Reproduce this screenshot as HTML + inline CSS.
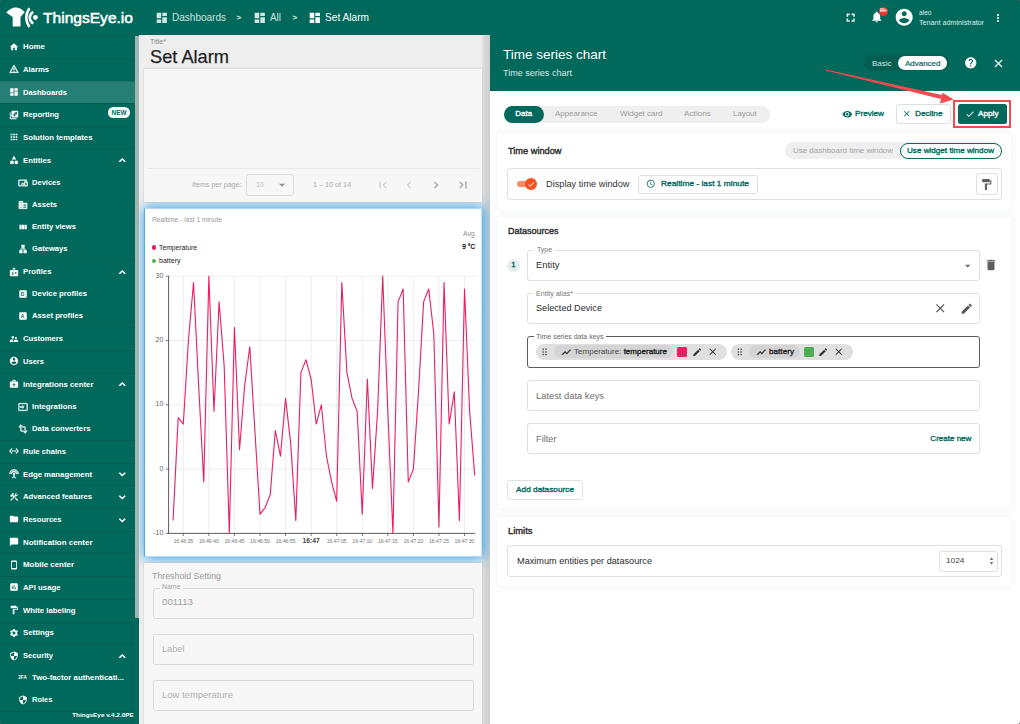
<!DOCTYPE html>
<html><head><meta charset="utf-8"><title>ThingsEye - Set Alarm</title>
<style>
html,body{margin:0;padding:0;}
body{width:1020px;height:724px;overflow:hidden;position:relative;background:#fff;font-family:"Liberation Sans",sans-serif;}
#r{position:absolute;left:0;top:0;width:1020px;height:724px;overflow:hidden;}
#r div,#r svg,#r span{position:absolute;box-sizing:border-box;}
.t{white-space:nowrap;}
</style></head><body><div id="r">
<div style="left:0px;top:0px;width:1020px;height:91px;background:#00695c;"></div>
<div style="left:0px;top:35px;width:139px;height:689px;background:#00695c;"></div>
<svg style="left:0px;top:0px;" width="60" height="36" viewBox="0 0 60 36"><path fill="#fff" d="M6.200 12.600 Q15.400 3 24.700 11.900 L20.500 17 V26.500 H12.700 V17 Z"/><path fill="none" stroke="#fff" stroke-width="2.600" d="M29.400 8.300 Q23.200 17.600 29.400 27"/><path fill="none" stroke="#fff" stroke-width="2.500" d="M33.100 11.800 Q26.300 17.600 33.100 23.600"/><circle fill="#fff" cx="35.400" cy="17.500" r="2.400"/></svg>
<span id="t1" class="t" style="top:9.27px;font-size:14.6px;line-height:18.25px;font-weight:400;color:#fff;left:42.9px;transform-origin:0 50%;transform:scaleX(1.0667);-webkit-text-stroke:0.5px #fff;">ThingsEye.io</span>
<svg style="left:155.4px;top:11.2px;" width="13.6" height="13.6" viewBox="0 0 24 24"><path fill="#d5e5e2" d="M3 13h8V3H3v10zm0 8h8v-6H3v6zm10 0h8V11h-8v10zm0-18v6h8V3h-8z"/></svg>
<span id="t2" class="t" style="top:11.62px;font-size:10.2px;line-height:12.75px;font-weight:400;color:#cfe2df;left:172px;transform-origin:0 50%;transform:scaleX(0.9829);">Dashboards</span>
<span id="t3" class="t" style="top:12.6px;font-size:8px;line-height:10.0px;font-weight:700;color:#e0ecea;left:236.5px;">&gt;</span>
<svg style="left:253.4px;top:11.2px;" width="13.6" height="13.6" viewBox="0 0 24 24"><path fill="#d5e5e2" d="M3 13h8V3H3v10zm0 8h8v-6H3v6zm10 0h8V11h-8v10zm0-18v6h8V3h-8z"/></svg>
<span id="t4" class="t" style="top:11.62px;font-size:10.2px;line-height:12.75px;font-weight:400;color:#cfe2df;left:270px;transform-origin:0 50%;transform:scaleX(0.971);">All</span>
<span id="t5" class="t" style="top:12.6px;font-size:8px;line-height:10.0px;font-weight:700;color:#e0ecea;left:292.5px;">&gt;</span>
<svg style="left:308.4px;top:11.2px;" width="13.6" height="13.6" viewBox="0 0 24 24"><path fill="#fff" d="M3 13h8V3H3v10zm0 8h8v-6H3v6zm10 0h8V11h-8v10zm0-18v6h8V3h-8z"/></svg>
<span id="t6" class="t" style="top:11.62px;font-size:10.2px;line-height:12.75px;font-weight:400;color:#fff;left:324.5px;transform-origin:0 50%;transform:scaleX(0.9961);">Set Alarm</span>
<svg style="left:843.85px;top:11.35px;stroke:#fff;stroke-width:0.6px;" width="13.3" height="13.3" viewBox="0 0 24 24"><path fill="#fff" d="M7 14H5v5h5v-2H7v-3zm-2-4h2V7h3V5H5v5zm12 7h-3v2h5v-5h-2v3zM14 5v2h3v3h2V5h-5z"/></svg>
<svg style="left:869.85px;top:10.35px;" width="13.5" height="13.5" viewBox="0 0 24 24"><path fill="#fff" d="M12 22c1.1 0 2-.9 2-2h-4c0 1.1.89 2 2 2zm6-6v-5c0-3.07-1.64-5.64-4.5-6.32V4c0-.83-.67-1.5-1.5-1.5s-1.500.67-1.500 1.500v.68C7.630 5.360 6 7.920 6 11v5l-2 2v1h16v-1l-2-2z"/></svg>
<div style="left:878.9px;top:6.5px;width:9px;height:9px;background:#e8352f;border-radius:50%;"></div>
<span id="t7" class="t" style="top:8.22px;font-size:4.6px;line-height:5.75px;font-weight:700;color:#fff;left:883.4px;transform:translateX(-50%);letter-spacing:-0.2px;">99+</span>
<svg style="left:894.2px;top:7.2px;" width="20.4" height="20.4" viewBox="0 0 24 24"><path fill="#fff" d="M12 2C6.48 2 2 6.48 2 12s4.48 10 10 10 10-4.48 10-10S17.52 2 12 2zm0 3c1.66 0 3 1.34 3 3s-1.34 3-3 3-3-1.34-3-3 1.34-3 3-3zm0 14.2c-2.500 0-4.710-1.280-6-3.220.030-1.990 4-3.080 6-3.080 1.990 0 5.970 1.090 6 3.080-1.290 1.940-3.500 3.220-6 3.220z"/></svg>
<span id="t8" class="t" style="top:8.82px;font-size:7px;line-height:8.75px;font-weight:400;color:#dfeeeb;left:919px;transform-origin:0 50%;transform:scaleX(0.9445);">aleo</span>
<span id="t9" class="t" style="top:19.23px;font-size:7px;line-height:8.75px;font-weight:400;color:#dfeeeb;left:919px;transform-origin:0 50%;transform:scaleX(1.0249);">Tenant administrator</span>
<svg style="left:992.0px;top:11.8px;" width="12" height="12" viewBox="0 0 24 24"><path fill="#fff" d="M12 8c1.1 0 2-.9 2-2s-.9-2-2-2-2 .9-2 2 .9 2 2 2zm0 2c-1.1 0-2 .9-2 2s.9 2 2 2 2-.9 2-2-.9-2-2-2zm0 6c-1.1 0-2 .9-2 2s.9 2 2 2 2-.9 2-2-.9-2-2-2z"/></svg>
<div style="left:0px;top:35.3px;width:135px;height:1px;background:rgba(0,0,0,0.105);"></div>
<svg style="left:8.5px;top:41.65px;" width="10" height="10" viewBox="0 0 24 24"><path fill="#fff" d="M10 20v-6h4v6h5v-8h3L12 3 2 12h3v8z"/></svg>
<span id="t10" class="t" style="top:42.21px;font-size:7.9px;line-height:9.88px;font-weight:700;color:#fff;left:23.3px;transform-origin:0 50%;transform:scaleX(1.0028);">Home</span>
<div style="left:0px;top:58.0px;width:135px;height:1px;background:rgba(0,0,0,0.105);"></div>
<svg style="left:8.5px;top:64.35px;stroke:#fff;stroke-width:0.9px;" width="10" height="10" viewBox="0 0 24 24"><path fill="#fff" d="M12 5.99L19.53 19H4.47L12 5.99M12 2L1 21h22L12 2zm1 14h-2v2h2v-2zm0-6h-2v4h2v-4z"/></svg>
<span id="t11" class="t" style="top:64.91px;font-size:7.9px;line-height:9.88px;font-weight:700;color:#fff;left:23.3px;transform-origin:0 50%;transform:scaleX(0.9714);">Alarms</span>
<div style="left:0px;top:80.7px;width:135px;height:22.7px;background:rgba(255,255,255,0.15);"></div>
<div style="left:0px;top:80.7px;width:135px;height:1px;background:rgba(0,0,0,0.105);"></div>
<svg style="left:8.5px;top:87.05px;" width="10" height="10" viewBox="0 0 24 24"><path fill="#fff" d="M3 13h8V3H3v10zm0 8h8v-6H3v6zm10 0h8V11h-8v10zm0-18v6h8V3h-8z"/></svg>
<span id="t12" class="t" style="top:87.61px;font-size:7.9px;line-height:9.88px;font-weight:700;color:#fff;left:23.3px;transform-origin:0 50%;transform:scaleX(0.9647);">Dashboards</span>
<div style="left:0px;top:103.4px;width:135px;height:1px;background:rgba(0,0,0,0.105);"></div>
<svg style="left:8.5px;top:109.75px;" width="10" height="10" viewBox="0 0 24 24"><path fill="#fff" d="M4 6H2v14c0 1.100.900 2 2 2h14v-2H4V6zm16-4H8c-1.100 0-2 .900-2 2v12c0 1.100.900 2 2 2h12c1.100 0 2-.900 2-2V4c0-1.100-.900-2-2-2zm-1 9h-4v4h-4V7h2v2h2V5h4v6z"/></svg>
<span id="t13" class="t" style="top:110.31px;font-size:7.9px;line-height:9.88px;font-weight:700;color:#fff;left:23.3px;transform-origin:0 50%;transform:scaleX(0.966);">Reporting</span>
<div style="left:0px;top:126.1px;width:135px;height:1px;background:rgba(0,0,0,0.105);"></div>
<svg style="left:8.5px;top:132.45px;" width="10" height="10" viewBox="0 0 24 24"><path fill="#fff" d="M4 8h4V4H4v4zm6 12h4v-4h-4v4zm-6 0h4v-4H4v4zm0-6h4v-4H4v4zm6 0h4v-4h-4v4zm6-10v4h4V4h-4zm-6 4h4V4h-4v4zm6 6h4v-4h-4v4zm0 6h4v-4h-4v4z"/></svg>
<span id="t14" class="t" style="top:133.01px;font-size:7.9px;line-height:9.88px;font-weight:700;color:#fff;left:23.3px;transform-origin:0 50%;transform:scaleX(0.9845);">Solution templates</span>
<div style="left:0px;top:148.8px;width:135px;height:1px;background:rgba(0,0,0,0.105);"></div>
<svg style="left:8.5px;top:155.15px;" width="10" height="10" viewBox="0 0 24 24"><path fill="#fff" d="M12 2l-5.500 9h11L12 2zm5.500 11a4.500 4.500 0 1 0 0 9 4.500 4.500 0 0 0 0-9zM3 21.500h8v-8H3v8z"/></svg>
<span id="t15" class="t" style="top:155.71px;font-size:7.9px;line-height:9.88px;font-weight:700;color:#fff;left:23.3px;transform-origin:0 50%;transform:scaleX(0.9825);">Entities</span>
<svg style="left:116.05px;top:154.3px;stroke:#fff;stroke-width:1.1px;" width="12.5" height="12.5" viewBox="0 0 24 24"><path fill="#fff" d="M7.41 15.41L12 10.83l4.59 4.58L18 14l-6-6-6 6z"/></svg>
<svg style="left:17.5px;top:177.8px;stroke:#fff;stroke-width:0.9px;" width="10" height="10" viewBox="0 0 24 24"><path fill="#fff" d="M3 6h18V4H3c-1.100 0-2 .900-2 2v12c0 1.100.900 2 2 2h4v-2H3V6zm10 6H9v1.780c-.610.550-1 1.330-1 2.220s.390 1.670 1 2.220V20h4v-1.780c.610-.550 1-1.340 1-2.220s-.390-1.670-1-2.220V12zm-2 5.500c-.830 0-1.500-.670-1.500-1.500s.670-1.500 1.500-1.500 1.500.670 1.500 1.500-.670 1.500-1.500 1.500zM22 8h-6c-.500 0-1 .500-1 1v10c0 .500.500 1 1 1h6c.500 0 1-.500 1-1V9c0-.500-.500-1-1-1zm-1 10h-4v-8h4v8z"/></svg>
<span id="t16" class="t" style="top:177.76px;font-size:7.9px;line-height:9.88px;font-weight:700;color:#fff;left:32.3px;transform-origin:0 50%;transform:scaleX(0.955);">Devices</span>
<svg style="left:17.5px;top:200.0px;stroke:#fff;stroke-width:0.9px;" width="10" height="10" viewBox="0 0 24 24"><path fill="#fff" d="M12 7V3H2v18h20V7H12zM6 19H4v-2h2v2zm0-4H4v-2h2v2zm0-4H4V9h2v2zm0-4H4V5h2v2zm4 12H8v-2h2v2zm0-4H8v-2h2v2zm0-4H8V9h2v2zm0-4H8V5h2v2zm10 12h-8v-2h2v-2h-2v-2h2v-2h-2V9h8v10zm-2-8h-2v2h2v-2zm0 4h-2v2h2v-2z"/></svg>
<span id="t17" class="t" style="top:199.96px;font-size:7.9px;line-height:9.88px;font-weight:700;color:#fff;left:32.3px;transform-origin:0 50%;transform:scaleX(0.9656);">Assets</span>
<svg style="left:17.5px;top:222.2px;" width="10" height="10" viewBox="0 0 24 24"><path fill="#fff" d="M3.500 6.500h5.300v11H3.500zM9.700 6.500h5.100v11H9.700zM15.700 6.500h5.300v11h-5.300z"/></svg>
<span id="t18" class="t" style="top:222.16px;font-size:7.9px;line-height:9.88px;font-weight:700;color:#fff;left:32.3px;transform-origin:0 50%;transform:scaleX(0.9647);">Entity views</span>
<svg style="left:17.5px;top:244.4px;" width="10" height="10" viewBox="0 0 24 24"><path fill="#fff" d="M13 22h8v-7h-3v-4h-5V9h3V2H8v7h3v2H6v4H3v7h8v-7H8v-2h8v2h-3v7z"/></svg>
<span id="t19" class="t" style="top:244.36px;font-size:7.9px;line-height:9.88px;font-weight:700;color:#fff;left:32.3px;transform-origin:0 50%;transform:scaleX(0.9631);">Gateways</span>
<div style="left:0px;top:260.3px;width:135px;height:1px;background:rgba(0,0,0,0.05);"></div>
<svg style="left:8.5px;top:266.65px;" width="10" height="10" viewBox="0 0 24 24"><path fill="#fff" d="M20 7h-5V4c0-1.100-.900-2-2-2h-2c-1.100 0-2 .900-2 2v3H4c-1.100 0-2 .900-2 2v11c0 1.100.900 2 2 2h16c1.100 0 2-.900 2-2V9c0-1.100-.900-2-2-2zM9 12c.830 0 1.500.670 1.500 1.500S9.830 15 9 15s-1.500-.670-1.500-1.500S8.170 12 9 12zm3 6H6v-.750c0-1 2-1.500 3-1.500s3 .500 3 1.500V18zm1-9h-2V4h2v5zm5 7.500h-4V15h4v1.500zm0-3h-4V12h4v1.500z"/></svg>
<span id="t20" class="t" style="top:267.21px;font-size:7.9px;line-height:9.88px;font-weight:700;color:#fff;left:23.3px;transform-origin:0 50%;transform:scaleX(0.9843);">Profiles</span>
<svg style="left:116.05px;top:265.8px;stroke:#fff;stroke-width:1.1px;" width="12.5" height="12.5" viewBox="0 0 24 24"><path fill="#fff" d="M7.41 15.41L12 10.83l4.59 4.58L18 14l-6-6-6 6z"/></svg>
<svg style="left:17.5px;top:289.2px;" width="10" height="10" viewBox="0 0 24 24"><path fill="#fff" d="M19 3H5c-1.100 0-2 .900-2 2v14c0 1.100.900 2 2 2h14c1.100 0 2-.900 2-2V5c0-1.100-.900-2-2-2z"/></svg>
<span id="t21" class="t" style="top:291.18px;font-size:5px;line-height:6.25px;font-weight:700;color:#00695c;left:22.5px;transform:translateX(-50%);">D</span>
<span id="t22" class="t" style="top:289.26px;font-size:7.9px;line-height:9.88px;font-weight:700;color:#fff;left:32.3px;transform-origin:0 50%;transform:scaleX(0.9797);">Device profiles</span>
<svg style="left:17.5px;top:311.4px;" width="10" height="10" viewBox="0 0 24 24"><path fill="#fff" d="M19 3H5c-1.100 0-2 .900-2 2v14c0 1.100.900 2 2 2h14c1.100 0 2-.900 2-2V5c0-1.100-.900-2-2-2z"/></svg>
<span id="t23" class="t" style="top:313.38px;font-size:5px;line-height:6.25px;font-weight:700;color:#00695c;left:22.5px;transform:translateX(-50%);">A</span>
<span id="t24" class="t" style="top:311.46px;font-size:7.9px;line-height:9.88px;font-weight:700;color:#fff;left:32.3px;transform-origin:0 50%;transform:scaleX(0.9772);">Asset profiles</span>
<div style="left:0px;top:327.4px;width:135px;height:1px;background:rgba(0,0,0,0.05);"></div>
<svg style="left:8.5px;top:333.75px;" width="10" height="10" viewBox="0 0 24 24"><path fill="#fff" d="M16.500 12c1.380 0 2.490-1.120 2.490-2.500S17.880 7 16.500 7C15.120 7 14 8.120 14 9.500s1.120 2.500 2.500 2.500zM9 11c1.660 0 2.990-1.340 2.990-3S10.660 5 9 5C7.340 5 6 6.340 6 8s1.340 3 3 3zm7.500 3c-1.830 0-5.500.920-5.500 2.750V19h11v-2.250c0-1.830-3.670-2.750-5.500-2.750zM9 13c-2.330 0-7 1.170-7 3.500V19h7v-2.250c0-.850.330-2.340 2.370-3.470C10.500 13.100 9.660 13 9 13z"/></svg>
<span id="t25" class="t" style="top:334.31px;font-size:7.9px;line-height:9.88px;font-weight:700;color:#fff;left:23.3px;transform-origin:0 50%;transform:scaleX(0.9704);">Customers</span>
<div style="left:0px;top:350.1px;width:135px;height:1px;background:rgba(0,0,0,0.105);"></div>
<svg style="left:8.5px;top:356.45px;" width="10" height="10" viewBox="0 0 24 24"><path fill="#fff" d="M12 2C6.48 2 2 6.48 2 12s4.48 10 10 10 10-4.48 10-10S17.52 2 12 2zm0 3c1.66 0 3 1.34 3 3s-1.34 3-3 3-3-1.34-3-3 1.34-3 3-3zm0 14.2c-2.500 0-4.710-1.280-6-3.220.030-1.990 4-3.080 6-3.080 1.990 0 5.970 1.090 6 3.080-1.290 1.940-3.500 3.220-6 3.220z"/></svg>
<span id="t26" class="t" style="top:357.01px;font-size:7.9px;line-height:9.88px;font-weight:700;color:#fff;left:23.3px;transform-origin:0 50%;transform:scaleX(0.9573);">Users</span>
<div style="left:0px;top:372.8px;width:135px;height:1px;background:rgba(0,0,0,0.105);"></div>
<svg style="left:8.5px;top:379.15px;" width="10" height="10" viewBox="0 0 24 24"><path fill="#fff" d="M20 6h-4V4c0-1.100-.900-2-2-2h-4c-1.100 0-2 .900-2 2v2H4c-1.100 0-2 .900-2 2v11c0 1.100.900 2 2 2h16c1.100 0 2-.900 2-2V8c0-1.100-.900-2-2-2zM10 4h4v2h-4V4zm6 11h-3v3h-2v-3H8v-2h3v-3h2v3h3v2z"/></svg>
<span id="t27" class="t" style="top:379.71px;font-size:7.9px;line-height:9.88px;font-weight:700;color:#fff;left:23.3px;transform-origin:0 50%;transform:scaleX(0.9925);">Integrations center</span>
<svg style="left:116.05px;top:378.3px;stroke:#fff;stroke-width:1.1px;" width="12.5" height="12.5" viewBox="0 0 24 24"><path fill="#fff" d="M7.41 15.41L12 10.83l4.59 4.58L18 14l-6-6-6 6z"/></svg>
<svg style="left:17.5px;top:401.8px;stroke:#fff;stroke-width:0.9px;" width="10" height="10" viewBox="0 0 24 24"><path fill="#fff" d="M21 3.010H3c-1.100 0-2 .900-2 2V9h2V4.990h18v14.030H3V15H1v4.010c0 1.100.900 1.980 2 1.980h18c1.100 0 2-.880 2-1.980v-14c0-1.110-.900-2-2-2zM11 16l4-4-4-4v3H1v2h10v3z"/></svg>
<span id="t28" class="t" style="top:401.76px;font-size:7.9px;line-height:9.88px;font-weight:700;color:#fff;left:32.3px;transform-origin:0 50%;transform:scaleX(0.9855);">Integrations</span>
<svg style="left:17.5px;top:424.0px;stroke:#fff;stroke-width:0.9px;" width="10" height="10" viewBox="0 0 24 24"><path fill="#fff" d="M22 18v-2H8V4h2L7 1 4 4h2v2H2v2h4v8c0 1.100.900 2 2 2h8v2h-2l3 3 3-3h-2v-2h4zM10 8h6v6h2V8c0-1.100-.900-2-2-2h-6v2z"/></svg>
<span id="t29" class="t" style="top:423.96px;font-size:7.9px;line-height:9.88px;font-weight:700;color:#fff;left:32.3px;transform-origin:0 50%;transform:scaleX(0.9806);">Data converters</span>
<div style="left:0px;top:439.9px;width:135px;height:1px;background:rgba(0,0,0,0.105);"></div>
<svg style="left:8.5px;top:446.25px;stroke:#fff;stroke-width:0.9px;" width="10" height="10" viewBox="0 0 24 24"><path fill="#fff" d="M7.770 6.760L6.230 5.480.820 12l5.410 6.520 1.540-1.280L3.420 12l4.350-5.240zM7 13h2v-2H7v2zm10-2h-2v2h2v-2zm-6 2h2v-2h-2v2zm6.770-7.520l-1.540 1.280L20.580 12l-4.350 5.240 1.540 1.280L23.180 12l-5.410-6.520z"/></svg>
<span id="t30" class="t" style="top:446.81px;font-size:7.9px;line-height:9.88px;font-weight:700;color:#fff;left:23.3px;transform-origin:0 50%;transform:scaleX(0.9707);">Rule chains</span>
<div style="left:0px;top:462.6px;width:135px;height:1px;background:rgba(0,0,0,0.105);"></div>
<svg style="left:8.5px;top:468.95px;stroke:#fff;stroke-width:0.9px;" width="10" height="10" viewBox="0 0 24 24"><path fill="#fff" d="M12 5c-3.870 0-7 3.130-7 7h2c0-2.760 2.240-5 5-5s5 2.240 5 5h2c0-3.870-3.130-7-7-7zm1 9.290c.880-.390 1.500-1.260 1.500-2.290 0-1.380-1.120-2.500-2.500-2.500S9.500 10.620 9.500 12c0 1.020.620 1.900 1.500 2.290v3.300L7.590 21 9 22.410l3-3 3 3L16.410 21 13 17.590v-3.300zM12 1C5.930 1 1 5.930 1 12h2c0-4.970 4.030-9 9-9s9 4.030 9 9h2c0-6.070-4.930-11-11-11z"/></svg>
<span id="t31" class="t" style="top:469.51px;font-size:7.9px;line-height:9.88px;font-weight:700;color:#fff;left:23.3px;transform-origin:0 50%;transform:scaleX(0.9833);">Edge management</span>
<svg style="left:116.05px;top:468.1px;stroke:#fff;stroke-width:1.1px;" width="12.5" height="12.5" viewBox="0 0 24 24"><path fill="#fff" d="M7.41 8.59L12 13.17l4.59-4.58L18 10l-6 6-6-6 1.41-1.41z"/></svg>
<div style="left:0px;top:485.3px;width:135px;height:1px;background:rgba(0,0,0,0.105);"></div>
<svg style="left:8.5px;top:491.65px;" width="10" height="10" viewBox="0 0 24 24"><path fill="#fff" d="M13.780 15.300l6 6 2.110-2.160-6-6-2.110 2.160zm3.720-5.200c-.39 0-.81-.05-1.140-.19L4.970 21.250l-2.110-2.110 7.410-7.400-1.780-1.790-.71.700-1.440-1.400v2.860l-.7.700-3.520-3.560.7-.7h2.810l-1.400-1.410 3.560-3.560a2.976 2.976 0 0 1 4.220 0l-2.110 2.110 1.410 1.410-.71.700 1.790 1.780 1.830-1.830c-.14-.33-.19-.75-.19-1.120 0-1.980 1.560-3.570 3.520-3.570.59 0 1.100.14 1.580.42L16.410 6.200l1.500 1.500 2.720-2.720c.28.470.37.980.37 1.590 0 1.960-1.540 3.530-3.500 3.530z"/></svg>
<span id="t32" class="t" style="top:492.21px;font-size:7.9px;line-height:9.88px;font-weight:700;color:#fff;left:23.3px;transform-origin:0 50%;transform:scaleX(0.9772);">Advanced features</span>
<svg style="left:116.05px;top:490.8px;stroke:#fff;stroke-width:1.1px;" width="12.5" height="12.5" viewBox="0 0 24 24"><path fill="#fff" d="M7.41 8.59L12 13.17l4.59-4.58L18 10l-6 6-6-6 1.41-1.41z"/></svg>
<div style="left:0px;top:508.0px;width:135px;height:1px;background:rgba(0,0,0,0.105);"></div>
<svg style="left:8.5px;top:514.35px;" width="10" height="10" viewBox="0 0 24 24"><path fill="#fff" d="M10 4H4c-1.100 0-1.990.900-1.990 2L2 18c0 1.100.900 2 2 2h16c1.100 0 2-.900 2-2V8c0-1.100-.900-2-2-2h-8l-2-2z"/></svg>
<span id="t33" class="t" style="top:514.91px;font-size:7.9px;line-height:9.88px;font-weight:700;color:#fff;left:23.3px;transform-origin:0 50%;transform:scaleX(0.9539);">Resources</span>
<svg style="left:116.05px;top:513.5px;stroke:#fff;stroke-width:1.1px;" width="12.5" height="12.5" viewBox="0 0 24 24"><path fill="#fff" d="M7.41 8.59L12 13.17l4.59-4.58L18 10l-6 6-6-6 1.41-1.41z"/></svg>
<div style="left:0px;top:530.7px;width:135px;height:1px;background:rgba(0,0,0,0.105);"></div>
<svg style="left:8.5px;top:537.05px;" width="10" height="10" viewBox="0 0 24 24"><path fill="#fff" d="M20 2H4c-1.100 0-2 .900-2 2v18l4-4h14c1.100 0 2-.900 2-2V4c0-1.100-.900-2-2-2z"/></svg>
<span id="t34" class="t" style="top:537.61px;font-size:7.9px;line-height:9.88px;font-weight:700;color:#fff;left:23.3px;transform-origin:0 50%;transform:scaleX(1.0032);">Notification center</span>
<div style="left:0px;top:553.4px;width:135px;height:1px;background:rgba(0,0,0,0.105);"></div>
<svg style="left:8.5px;top:559.75px;" width="10" height="10" viewBox="0 0 24 24"><path fill="#fff" d="M17 1.010L7 1c-1.100 0-2 .900-2 2v18c0 1.100.900 2 2 2h10c1.100 0 2-.900 2-2V3c0-1.100-.900-1.990-2-1.990zM17 19H7V5h10v14z"/></svg>
<span id="t35" class="t" style="top:560.31px;font-size:7.9px;line-height:9.88px;font-weight:700;color:#fff;left:23.3px;transform-origin:0 50%;transform:scaleX(1.0025);">Mobile center</span>
<div style="left:0px;top:576.1px;width:135px;height:1px;background:rgba(0,0,0,0.105);"></div>
<svg style="left:8.5px;top:582.45px;" width="10" height="10" viewBox="0 0 24 24"><path fill="#fff" d="M19 3H5c-1.100 0-2 .900-2 2v14c0 1.100.900 2 2 2h14c1.100 0 2-.900 2-2V5c0-1.100-.900-2-2-2zM9 17H7v-7h2v7zm4 0h-2V7h2v10zm4 0h-2v-4h2v4z"/></svg>
<span id="t36" class="t" style="top:583.01px;font-size:7.9px;line-height:9.88px;font-weight:700;color:#fff;left:23.3px;transform-origin:0 50%;transform:scaleX(0.9828);">API usage</span>
<div style="left:0px;top:598.8px;width:135px;height:1px;background:rgba(0,0,0,0.105);"></div>
<svg style="left:8.5px;top:605.15px;" width="10" height="10" viewBox="0 0 24 24"><path fill="#fff" d="M18 4V3c0-.550-.450-1-1-1H5c-.550 0-1 .450-1 1v4c0 .550.450 1 1 1h12c.550 0 1-.450 1-1V6h1v4H9v11c0 .550.450 1 1 1h2c.550 0 1-.450 1-1v-9h8V4h-3z"/></svg>
<span id="t37" class="t" style="top:605.71px;font-size:7.9px;line-height:9.88px;font-weight:700;color:#fff;left:23.3px;transform-origin:0 50%;transform:scaleX(0.9816);">White labeling</span>
<div style="left:0px;top:621.5px;width:135px;height:1px;background:rgba(0,0,0,0.105);"></div>
<svg style="left:8.5px;top:627.85px;" width="10" height="10" viewBox="0 0 24 24"><path fill="#fff" d="M19.140 12.940c.040-.300.060-.610.060-.940 0-.320-.020-.640-.070-.940l2.030-1.580c.180-.140.230-.410.120-.610l-1.920-3.320c-.120-.220-.370-.290-.590-.220l-2.390.960c-.500-.380-1.030-.700-1.620-.940l-.360-2.540c-.040-.240-.240-.410-.480-.410h-3.840c-.240 0-.430.170-.470.410l-.360 2.540c-.590.240-1.130.570-1.620.940l-2.390-.960c-.220-.080-.470 0-.590.220L2.740 8.870c-.120.210-.080.470.120.610l2.030 1.580c-.050.300-.090.630-.090.940s.020.640.070.940l-2.030 1.580c-.180.140-.230.410-.120.610l1.920 3.320c.120.220.370.290.590.220l2.390-.960c.500.380 1.030.700 1.620.940l.360 2.540c.050.240.240.410.480.410h3.840c.240 0 .440-.170.470-.410l.360-2.540c.590-.240 1.130-.560 1.620-.940l2.390.960c.220.080.470 0 .590-.220l1.920-3.320c.120-.220.070-.470-.120-.610l-2.010-1.580zM12 15.600c-1.980 0-3.600-1.620-3.600-3.600s1.620-3.600 3.600-3.600 3.600 1.620 3.600 3.600-1.620 3.600-3.600 3.600z"/></svg>
<span id="t38" class="t" style="top:628.41px;font-size:7.9px;line-height:9.88px;font-weight:700;color:#fff;left:23.3px;transform-origin:0 50%;transform:scaleX(0.9955);">Settings</span>
<div style="left:0px;top:644.2px;width:135px;height:1px;background:rgba(0,0,0,0.105);"></div>
<svg style="left:8.5px;top:650.55px;" width="10" height="10" viewBox="0 0 24 24"><path fill="#fff" d="M12 1L3 5v6c0 5.550 3.840 10.740 9 12 5.160-1.260 9-6.450 9-12V5l-9-4zm0 10.990h7c-.530 4.120-3.280 7.790-7 8.940V12H5V6.300l7-3.110v8.800z"/></svg>
<span id="t39" class="t" style="top:651.11px;font-size:7.9px;line-height:9.88px;font-weight:700;color:#fff;left:23.3px;transform-origin:0 50%;transform:scaleX(0.9634);">Security</span>
<svg style="left:116.05px;top:649.7px;stroke:#fff;stroke-width:1.1px;" width="12.5" height="12.5" viewBox="0 0 24 24"><path fill="#fff" d="M7.41 15.41L12 10.83l4.59 4.58L18 14l-6-6-6 6z"/></svg>
<span id="t40" class="t" style="top:675.03px;font-size:4.6px;line-height:5.75px;font-weight:700;color:#fff;left:18.3px;">2FA</span>
<span id="t41" class="t" style="top:673.16px;font-size:7.9px;line-height:9.88px;font-weight:700;color:#fff;left:32.3px;transform-origin:0 50%;transform:scaleX(0.9914);">Two-factor authenticati...</span>
<svg style="left:17.5px;top:695.4px;" width="10" height="10" viewBox="0 0 24 24"><path fill="#fff" d="M12 1L3 5v6c0 5.550 3.840 10.740 9 12 5.160-1.260 9-6.450 9-12V5l-9-4zm0 10.990h7c-.530 4.120-3.280 7.790-7 8.940V12H5V6.300l7-3.110v8.800z"/></svg>
<span id="t42" class="t" style="top:695.36px;font-size:7.9px;line-height:9.88px;font-weight:700;color:#fff;left:32.3px;transform-origin:0 50%;transform:scaleX(0.9535);">Roles</span>
<div style="left:0px;top:711.3px;width:135px;height:1px;background:rgba(0,0,0,0.105);"></div>
<div style="left:108px;top:107.3px;width:22px;height:10.6px;background:#fff;border-radius:5.300px;"></div>
<span id="t43" class="t" style="top:108.7px;font-size:6.4px;line-height:8.0px;font-weight:700;color:#00695c;left:119px;transform:translateX(-50%);">NEW</span>
<span id="t44" class="t" style="top:711.12px;font-size:6.2px;line-height:7.75px;font-weight:700;color:#fff;right:886.5px;transform-origin:100% 50%;transform:scaleX(1.0296);">ThingsEye v.4.2.0PE</span>
<div style="left:135px;top:36px;width:4px;height:581.5px;background:#9fb6b1;"></div>
<div style="left:139px;top:35.3px;width:350.5px;height:689px;background:#eeeeee;"></div>
<div style="left:481.5px;top:35.3px;width:8px;height:689px;background:linear-gradient(90deg,#e2e2e2 0%,#d6d6d6 40%,#cdcdcd 100%);"></div>
<div style="left:139px;top:35.300px;width:350.500px;height:689px;overflow:hidden;"><div style="left:5.800px;top:173px;width:337px;height:348px;box-shadow:0 0 12px 1.500px rgb(45,160,236);"></div></div>
<span id="t45" class="t" style="top:38.15px;font-size:6.8px;line-height:8.5px;font-weight:400;color:#8a8a8a;left:150px;transform-origin:0 50%;transform:scaleX(1.0503);">Title*</span>
<span id="t46" class="t" style="top:45.62px;font-size:18.2px;line-height:22.75px;font-weight:400;color:#1f1f1f;left:149.5px;transform-origin:0 50%;transform:scaleX(1.002);-webkit-text-stroke:0.25px #1f1f1f;">Set Alarm</span>
<div style="left:143.5px;top:69px;width:338.5px;height:133px;background:#f7f7f7;box-shadow:0 0 2px rgba(0,0,0,0.16);"></div>
<div style="left:147px;top:168.3px;width:331.5px;height:1px;background:#e9e9e9;"></div>
<span id="t47" class="t" style="top:181.12px;font-size:7px;line-height:8.75px;font-weight:400;color:#ababab;left:192px;transform-origin:0 50%;transform:scaleX(1.0177);">Items per page:</span>
<div style="left:246px;top:173.5px;width:47.5px;height:22px;border:1px solid #dcdcdc;border-radius:2.500px;"></div>
<span id="t48" class="t" style="top:181.12px;font-size:7px;line-height:8.75px;font-weight:400;color:#b9b9b9;left:255.5px;transform-origin:0 50%;transform:scaleX(0.9619);">10</span>
<svg style="left:274.5px;top:178.0px;" width="14" height="14" viewBox="0 0 24 24"><path fill="#8f8f8f" d="M7 10l5 5 5-5z"/></svg>
<span id="t49" class="t" style="top:181.12px;font-size:7px;line-height:8.75px;font-weight:400;color:#ababab;left:313px;transform-origin:0 50%;transform:scaleX(1.0275);">1 – 10 of 14</span>
<svg style="left:375.8px;top:177.8px;" width="14" height="14" viewBox="0 0 24 24"><path fill="#cbcbcb" d="M18.410 16.590L13.820 12l4.590-4.590L17 6l-6 6 6 6zM6 6h2v12H6z"/></svg>
<svg style="left:402.0px;top:177.8px;" width="14" height="14" viewBox="0 0 24 24"><path fill="#cbcbcb" d="M15.410 7.410L14 6l-6 6 6 6 1.410-1.410L10.830 12z"/></svg>
<svg style="left:429.0px;top:177.8px;" width="14" height="14" viewBox="0 0 24 24"><path fill="#999" d="M10 6L8.590 7.410 13.170 12l-4.580 4.590L10 18l6-6z"/></svg>
<svg style="left:455.8px;top:177.8px;" width="14" height="14" viewBox="0 0 24 24"><path fill="#999" d="M5.590 7.410L10.180 12l-4.590 4.590L7 18l6-6-6-6zM16 6h2v12h-2z"/></svg>
<div style="left:144.3px;top:207.8px;width:338px;height:349px;background:#fff;border:1px solid rgba(60,160,240,0.4);border-left-color:rgba(40,150,240,0.8);border-right-color:rgba(60,160,240,0.3);"></div>
<span id="t50" class="t" style="top:216.05px;font-size:6.8px;line-height:8.5px;font-weight:400;color:#9a9a9a;left:151.5px;transform-origin:0 50%;transform:scaleX(0.9803);">Realtime - last 1 minute</span>
<span id="t51" class="t" style="top:229.95px;font-size:6.8px;line-height:8.5px;font-weight:400;color:#8e8e8e;right:545px;transform-origin:100% 50%;transform:scaleX(0.9919);">Avg</span>
<div style="left:151.7px;top:244.9px;width:4.8px;height:4.8px;background:#e91e63;border-radius:50%;"></div>
<span id="t52" class="t" style="top:243.59px;font-size:6.9px;line-height:8.62px;font-weight:400;color:#222;left:158.5px;transform-origin:0 50%;transform:scaleX(0.9822);">Temperature</span>
<span id="t53" class="t" style="top:243.35px;font-size:6.8px;line-height:8.5px;font-weight:400;color:#222;-webkit-text-stroke:0.29px #222;right:545px;transform-origin:100% 50%;transform:scaleX(0.9777);">9 °C</span>
<div style="left:151.7px;top:258.6px;width:4.8px;height:4.8px;background:#4caf50;border-radius:50%;"></div>
<span id="t54" class="t" style="top:257.19px;font-size:6.9px;line-height:8.62px;font-weight:400;color:#222;left:158.5px;transform-origin:0 50%;transform:scaleX(1.02);">battery</span>
<svg style="left:0px;top:0px;" width="1020" height="724" viewBox="0 0 1020 724"><line x1="168.6" x2="475.2" y1="276.15" y2="276.15" stroke="#e6e6e6" stroke-width="0.700"/><line x1="168.6" x2="475.2" y1="340.46" y2="340.46" stroke="#e6e6e6" stroke-width="0.700"/><line x1="168.6" x2="475.2" y1="404.77" y2="404.77" stroke="#e6e6e6" stroke-width="0.700"/><line x1="168.6" x2="475.2" y1="469.08" y2="469.08" stroke="#e6e6e6" stroke-width="0.700"/><line x1="183.3" x2="183.3" y1="276.15" y2="533.39" stroke="#e6e6e6" stroke-width="0.700"/><line x1="183.3" x2="183.3" y1="533.39" y2="535.99" stroke="#555" stroke-width="0.800"/><line x1="208.87" x2="208.87" y1="276.15" y2="533.39" stroke="#e6e6e6" stroke-width="0.700"/><line x1="208.87" x2="208.87" y1="533.39" y2="535.99" stroke="#555" stroke-width="0.800"/><line x1="234.43" x2="234.43" y1="276.15" y2="533.39" stroke="#e6e6e6" stroke-width="0.700"/><line x1="234.43" x2="234.43" y1="533.39" y2="535.99" stroke="#555" stroke-width="0.800"/><line x1="260.0" x2="260.0" y1="276.15" y2="533.39" stroke="#e6e6e6" stroke-width="0.700"/><line x1="260.0" x2="260.0" y1="533.39" y2="535.99" stroke="#555" stroke-width="0.800"/><line x1="285.56" x2="285.56" y1="276.15" y2="533.39" stroke="#e6e6e6" stroke-width="0.700"/><line x1="285.56" x2="285.56" y1="533.39" y2="535.99" stroke="#555" stroke-width="0.800"/><line x1="311.12" x2="311.12" y1="276.15" y2="533.39" stroke="#e6e6e6" stroke-width="0.700"/><line x1="311.12" x2="311.12" y1="533.39" y2="535.99" stroke="#555" stroke-width="0.800"/><line x1="336.69" x2="336.69" y1="276.15" y2="533.39" stroke="#e6e6e6" stroke-width="0.700"/><line x1="336.69" x2="336.69" y1="533.39" y2="535.99" stroke="#555" stroke-width="0.800"/><line x1="362.25" x2="362.25" y1="276.15" y2="533.39" stroke="#e6e6e6" stroke-width="0.700"/><line x1="362.25" x2="362.25" y1="533.39" y2="535.99" stroke="#555" stroke-width="0.800"/><line x1="387.82" x2="387.82" y1="276.15" y2="533.39" stroke="#e6e6e6" stroke-width="0.700"/><line x1="387.82" x2="387.82" y1="533.39" y2="535.99" stroke="#555" stroke-width="0.800"/><line x1="413.38" x2="413.38" y1="276.15" y2="533.39" stroke="#e6e6e6" stroke-width="0.700"/><line x1="413.38" x2="413.38" y1="533.39" y2="535.99" stroke="#555" stroke-width="0.800"/><line x1="438.95" x2="438.95" y1="276.15" y2="533.39" stroke="#e6e6e6" stroke-width="0.700"/><line x1="438.95" x2="438.95" y1="533.39" y2="535.99" stroke="#555" stroke-width="0.800"/><line x1="464.52" x2="464.52" y1="276.15" y2="533.39" stroke="#e6e6e6" stroke-width="0.700"/><line x1="464.52" x2="464.52" y1="533.39" y2="535.99" stroke="#555" stroke-width="0.800"/><line x1="166.0" x2="168.6" y1="276.15" y2="276.15" stroke="#555" stroke-width="0.800"/><line x1="166.0" x2="168.6" y1="340.46" y2="340.46" stroke="#555" stroke-width="0.800"/><line x1="166.0" x2="168.6" y1="404.77" y2="404.77" stroke="#555" stroke-width="0.800"/><line x1="166.0" x2="168.6" y1="469.08" y2="469.08" stroke="#555" stroke-width="0.800"/><line x1="166.0" x2="168.6" y1="533.39" y2="533.39" stroke="#555" stroke-width="0.800"/><line x1="168.6" x2="168.6" y1="275.75" y2="533.79" stroke="#4a4a4a" stroke-width="0.900"/><line x1="168.6" x2="475.2" y1="533.39" y2="533.39" stroke="#4a4a4a" stroke-width="0.900"/><polyline fill="none" stroke="#e91e63" stroke-width="1.100" stroke-linejoin="round" points="173.07,520.53 178.19,417.63 183.3,424.06 188.41,340.46 193.53,282.58 198.64,385.48 203.75,481.94 208.87,276.15 213.98,411.2 219.09,301.87 224.2,366.18 229.32,533.39 234.43,327.6 239.54,449.79 244.66,385.48 249.77,346.89 254.88,430.49 260.0,514.1 265.11,507.67 270.22,494.8 275.33,430.49 280.45,456.22 285.56,398.34 290.67,443.36 295.79,520.53 300.9,372.62 306.01,359.75 311.12,379.05 316.24,424.06 321.35,404.77 326.46,456.22 331.58,481.94 336.69,501.24 341.8,282.58 346.92,372.62 352.03,398.34 357.14,411.2 362.25,514.1 367.37,379.05 372.48,488.37 377.59,411.2 382.71,276.15 387.82,411.2 392.93,533.39 398.05,301.87 403.16,289.01 408.27,481.94 413.38,469.08 418.5,391.91 423.61,301.87 428.72,289.01 433.84,334.03 438.95,526.96 444.06,282.58 449.18,424.06 454.29,391.91 459.4,520.53 464.52,289.01 469.63,411.2 474.74,475.51"/></svg>
<span id="t55" class="t" style="top:271.67px;font-size:7px;line-height:8.75px;font-weight:400;color:#666;right:856.6px;">30</span>
<span id="t56" class="t" style="top:335.98px;font-size:7px;line-height:8.75px;font-weight:400;color:#666;right:856.6px;">20</span>
<span id="t57" class="t" style="top:400.29px;font-size:7px;line-height:8.75px;font-weight:400;color:#666;right:856.6px;">10</span>
<span id="t58" class="t" style="top:464.6px;font-size:7px;line-height:8.75px;font-weight:400;color:#666;right:856.6px;">0</span>
<span id="t59" class="t" style="top:528.91px;font-size:7px;line-height:8.75px;font-weight:400;color:#666;right:856.6px;">-10</span>
<span id="t60" class="t" style="top:537.99px;font-size:5.3px;line-height:6.62px;font-weight:400;color:#777;left:183.3px;transform:translateX(-50%);letter-spacing:-0.1px;">16:46:35</span>
<span id="t61" class="t" style="top:537.99px;font-size:5.3px;line-height:6.62px;font-weight:400;color:#777;left:208.87px;transform:translateX(-50%);letter-spacing:-0.1px;">16:46:40</span>
<span id="t62" class="t" style="top:537.99px;font-size:5.3px;line-height:6.62px;font-weight:400;color:#777;left:234.43px;transform:translateX(-50%);letter-spacing:-0.1px;">16:46:45</span>
<span id="t63" class="t" style="top:537.99px;font-size:5.3px;line-height:6.62px;font-weight:400;color:#777;left:260.0px;transform:translateX(-50%);letter-spacing:-0.1px;">16:46:50</span>
<span id="t64" class="t" style="top:537.99px;font-size:5.3px;line-height:6.62px;font-weight:400;color:#777;left:285.56px;transform:translateX(-50%);letter-spacing:-0.1px;">16:46:55</span>
<span id="t65" class="t" style="top:537.35px;font-size:6.8px;line-height:8.5px;font-weight:700;color:#444;left:311.12px;transform:translateX(-50%);">16:47</span>
<span id="t66" class="t" style="top:537.99px;font-size:5.3px;line-height:6.62px;font-weight:400;color:#777;left:336.69px;transform:translateX(-50%);letter-spacing:-0.1px;">16:47:05</span>
<span id="t67" class="t" style="top:537.99px;font-size:5.3px;line-height:6.62px;font-weight:400;color:#777;left:362.25px;transform:translateX(-50%);letter-spacing:-0.1px;">16:47:10</span>
<span id="t68" class="t" style="top:537.99px;font-size:5.3px;line-height:6.62px;font-weight:400;color:#777;left:387.82px;transform:translateX(-50%);letter-spacing:-0.1px;">16:47:15</span>
<span id="t69" class="t" style="top:537.99px;font-size:5.3px;line-height:6.62px;font-weight:400;color:#777;left:413.38px;transform:translateX(-50%);letter-spacing:-0.1px;">16:47:20</span>
<span id="t70" class="t" style="top:537.99px;font-size:5.3px;line-height:6.62px;font-weight:400;color:#777;left:438.95px;transform:translateX(-50%);letter-spacing:-0.1px;">16:47:25</span>
<span id="t71" class="t" style="top:537.99px;font-size:5.3px;line-height:6.62px;font-weight:400;color:#777;left:464.52px;transform:translateX(-50%);letter-spacing:-0.1px;">16:47:30</span>
<div style="left:143.5px;top:563px;width:338.5px;height:170px;background:#f7f7f7;box-shadow:0 0 2px rgba(0,0,0,0.16);"></div>
<span id="t72" class="t" style="top:571.17px;font-size:9px;line-height:11.25px;font-weight:400;color:#9a9a9a;left:152px;transform-origin:0 50%;transform:scaleX(0.9781);">Threshold Setting</span>
<div style="left:153px;top:587.5px;width:321px;height:31px;border:1px solid #dadada;border-radius:2.500px;"></div>
<div style="left:160px;top:586.5px;width:23px;height:3px;background:#f7f7f7;"></div>
<span id="t73" class="t" style="top:583.45px;font-size:6.8px;line-height:8.5px;font-weight:400;color:#a3a3a3;left:162px;transform-origin:0 50%;transform:scaleX(1.0198);">Name</span>
<span id="t74" class="t" style="top:597.49px;font-size:9.3px;line-height:11.62px;font-weight:400;color:#a0a0a0;left:162px;transform-origin:0 50%;transform:scaleX(1.0453);">001113</span>
<div style="left:153px;top:633.5px;width:321px;height:31px;border:1px solid #dadada;border-radius:2.500px;"></div>
<span id="t75" class="t" style="top:644.29px;font-size:9.3px;line-height:11.62px;font-weight:400;color:#b0b0b0;left:162px;transform-origin:0 50%;transform:scaleX(0.989);">Label</span>
<div style="left:153px;top:679.5px;width:321px;height:31px;border:1px solid #dadada;border-radius:2.500px;"></div>
<span id="t76" class="t" style="top:690.29px;font-size:9.3px;line-height:11.62px;font-weight:400;color:#b0b0b0;left:162px;transform-origin:0 50%;transform:scaleX(1.0177);">Low temperature</span>
<div style="left:489.5px;top:90.7px;width:530.5px;height:634px;background:#fff;"></div>
<span id="t77" class="t" style="top:45.7px;font-size:13.6px;line-height:17.0px;font-weight:400;color:#fff;left:503px;transform-origin:0 50%;transform:scaleX(0.9928);">Time series chart</span>
<span id="t78" class="t" style="top:67.55px;font-size:9.2px;line-height:11.5px;font-weight:400;color:#d9e9e6;left:503px;transform-origin:0 50%;transform:scaleX(0.984);">Time series chart</span>
<div style="left:864px;top:55px;width:85px;height:16px;background:rgba(0,0,0,0.10);border-radius:8px;"></div>
<span id="t79" class="t" style="top:58.96px;font-size:7.9px;line-height:9.88px;font-weight:400;color:#d6e6e3;left:871.7px;transform-origin:0 50%;transform:scaleX(1.0105);">Basic</span>
<div style="left:898px;top:56.2px;width:49px;height:14px;background:#fff;border-radius:7px;"></div>
<span id="t80" class="t" style="top:59.06px;font-size:7.9px;line-height:9.88px;font-weight:400;color:#00695c;left:905.3px;transform-origin:0 50%;transform:scaleX(1.0111);-webkit-text-stroke:0.2px #00695c;">Advanced</span>
<svg style="left:964.25px;top:56.25px;" width="13.5" height="13.5" viewBox="0 0 24 24"><path fill="#fff" d="M12 2C6.48 2 2 6.48 2 12s4.48 10 10 10 10-4.48 10-10S17.52 2 12 2zm1 17h-2v-2h2v2zm2.070-7.750l-.900.920C13.450 12.900 13 13.500 13 15h-2v-.500c0-1.100.450-2.100 1.170-2.830l1.240-1.260c.370-.360.590-.860.590-1.410 0-1.100-.900-2-2-2s-2 .900-2 2H8c0-2.210 1.790-4 4-4s4 1.790 4 4c0 .880-.360 1.680-.930 2.250z"/></svg>
<svg style="left:991.7px;top:56.8px;stroke:#fff;stroke-width:0.5px;" width="13" height="13" viewBox="0 0 24 24"><path fill="#fff" d="M19 6.41L17.59 5 12 10.59 6.41 5 5 6.41 10.59 12 5 17.59 6.41 19 12 13.41 17.59 19 19 17.59 13.41 12z"/></svg>
<div style="left:489.5px;top:90.7px;width:530.5px;height:40px;background:#fff;"></div>
<div style="left:503.5px;top:105.6px;width:266.5px;height:17px;background:#efefef;border-radius:9px;"></div>
<div style="left:503.5px;top:105.6px;width:40.5px;height:17px;background:#00695c;border-radius:9px;"></div>
<span id="t81" class="t" style="top:109.06px;font-size:7.9px;line-height:9.88px;font-weight:400;color:#fff;-webkit-text-stroke:0.33px #fff;left:523.7px;transform:translateX(-50%);">Data</span>
<span id="t82" class="t" style="top:109.06px;font-size:7.9px;line-height:9.88px;font-weight:400;color:#9b9b9b;left:555px;transform-origin:0 50%;transform:scaleX(0.9985);">Appearance</span>
<span id="t83" class="t" style="top:109.06px;font-size:7.9px;line-height:9.88px;font-weight:400;color:#9b9b9b;left:619.5px;transform-origin:0 50%;transform:scaleX(1.0093);">Widget card</span>
<span id="t84" class="t" style="top:109.06px;font-size:7.9px;line-height:9.88px;font-weight:400;color:#9b9b9b;left:684px;transform-origin:0 50%;transform:scaleX(1.0428);">Actions</span>
<span id="t85" class="t" style="top:109.06px;font-size:7.9px;line-height:9.88px;font-weight:400;color:#9b9b9b;left:733.3px;transform-origin:0 50%;transform:scaleX(0.9999);">Layout</span>
<svg style="left:841.75px;top:108.75px;" width="10.5" height="10.5" viewBox="0 0 24 24"><path fill="#00695c" d="M12 4.5C7 4.500 2.730 7.610 1 12c1.730 4.390 6 7.500 11 7.500s9.270-3.110 11-7.500c-1.730-4.390-6-7.500-11-7.500zM12 17c-2.760 0-5-2.240-5-5s2.240-5 5-5 5 2.240 5 5-2.240 5-5 5zm0-8c-1.660 0-3 1.340-3 3s1.340 3 3 3 3-1.340 3-3-1.340-3-3-3z"/></svg>
<span id="t86" class="t" style="top:109.06px;font-size:7.9px;line-height:9.88px;font-weight:400;color:#00695c;-webkit-text-stroke:0.33px #00695c;left:855px;transform-origin:0 50%;transform:scaleX(1.0328);">Preview</span>
<div style="left:895.5px;top:104px;width:55.3px;height:20px;border:1px solid #dedede;border-radius:2.500px;background:#fff;"></div>
<svg style="left:902.25px;top:109.25px;" width="9.5" height="9.5" viewBox="0 0 24 24"><path fill="#00695c" d="M19 6.41L17.59 5 12 10.59 6.41 5 5 6.41 10.59 12 5 17.59 6.41 19 12 13.41 17.59 19 19 17.59 13.41 12z"/></svg>
<span id="t87" class="t" style="top:109.06px;font-size:7.9px;line-height:9.88px;font-weight:400;color:#00695c;-webkit-text-stroke:0.33px #00695c;left:914.7px;transform-origin:0 50%;transform:scaleX(1.0445);">Decline</span>
<div style="left:958px;top:104px;width:49px;height:20px;background:#00695c;border-radius:2.500px;"></div>
<svg style="left:964.5px;top:109.0px;" width="10" height="10" viewBox="0 0 24 24"><path fill="#fff" d="M9 16.17L4.83 12l-1.42 1.41L9 19 21 7l-1.41-1.41z"/></svg>
<span id="t88" class="t" style="top:109.06px;font-size:7.9px;line-height:9.88px;font-weight:400;color:#fff;-webkit-text-stroke:0.33px #fff;left:977.5px;transform-origin:0 50%;transform:scaleX(1.038);">Apply</span>
<div style="left:953.2px;top:100px;width:57.4px;height:28px;border:2px solid #f4494e;"></div>
<svg style="left:0px;top:0px;" width="1020" height="724" viewBox="0 0 1020 724"><path fill="#f4494e" d="M825.800 69.600L942 95L941 99.100L825.600 70.600Z"/><path fill="#f4494e" d="M953.700 99.600L939.900 103.500L942.500 92.800Z"/></svg>
<div style="left:497.5px;top:133px;width:513px;height:75.5px;background:#fff;border-radius:3px;box-shadow:0 0 5px 2.500px rgba(0,60,45,0.035);"></div>
<span id="t89" class="t" style="top:145.68px;font-size:9px;line-height:11.25px;font-weight:400;color:#2b2b2b;-webkit-text-stroke:0.38px #2b2b2b;left:507.5px;transform-origin:0 50%;transform:scaleX(1.0251);">Time window</span>
<div style="left:785px;top:141.8px;width:216.5px;height:17.4px;background:#efefef;border-radius:9px;"></div>
<span id="t90" class="t" style="top:145.56px;font-size:7.9px;line-height:9.88px;font-weight:400;color:#a2a2a2;left:792.5px;transform-origin:0 50%;transform:scaleX(1.0088);">Use dashboard time window</span>
<div style="left:899.5px;top:142.6px;width:102px;height:16px;background:#fff;border:1px solid #00695c;border-radius:8px;"></div>
<span id="t91" class="t" style="top:145.66px;font-size:7.9px;line-height:9.88px;font-weight:400;color:#00695c;-webkit-text-stroke:0.33px #00695c;left:907px;transform-origin:0 50%;transform:scaleX(1.0279);">Use widget time window</span>
<div style="left:507px;top:168px;width:494.5px;height:31.5px;border:1px solid #e0e0e0;border-radius:3px;background:#fff;"></div>
<div style="left:516.5px;top:180.7px;width:18px;height:6.8px;background:#f58a68;border-radius:3.400px;"></div>
<div style="left:525.3px;top:178px;width:12.2px;height:12.2px;background:#f4511e;border-radius:50%;"></div>
<svg style="left:527.15px;top:179.85px;" width="8.5" height="8.5" viewBox="0 0 24 24"><path fill="#fff" d="M9 16.17L4.83 12l-1.42 1.41L9 19 21 7l-1.41-1.41z"/></svg>
<span id="t92" class="t" style="top:178.51px;font-size:9.1px;line-height:11.38px;font-weight:400;color:#333;left:545.5px;transform-origin:0 50%;transform:scaleX(1.0135);">Display time window</span>
<div style="left:638.3px;top:174.5px;width:120px;height:19.2px;border:1px solid #e0e0e0;border-radius:2.500px;background:#fff;"></div>
<svg style="left:646.45px;top:179.35px;" width="9.5" height="9.5" viewBox="0 0 24 24"><path fill="#00695c" d="M11.990 2C6.470 2 2 6.480 2 12s4.470 10 9.990 10C17.520 22 22 17.520 22 12S17.520 2 11.990 2zM12 20c-4.420 0-8-3.580-8-8s3.580-8 8-8 8 3.580 8 8-3.580 8-8 8zm.500-13H11v6l5.250 3.150.750-1.230-4.500-2.670z"/></svg>
<span id="t93" class="t" style="top:179.26px;font-size:7.9px;line-height:9.88px;font-weight:400;color:#00695c;-webkit-text-stroke:0.33px #00695c;left:661px;transform-origin:0 50%;transform:scaleX(1.0616);">Realtime - last 1 minute</span>
<div style="left:975.5px;top:173.3px;width:22.2px;height:21.5px;border:1px solid #e0e0e0;border-radius:2.500px;background:#fff;"></div>
<svg style="left:980.1px;top:177.5px;" width="13" height="13" viewBox="0 0 24 24"><path fill="#616161" d="M18 4V3c0-.550-.450-1-1-1H5c-.550 0-1 .450-1 1v4c0 .550.450 1 1 1h12c.550 0 1-.450 1-1V6h1v4H9v11c0 .550.450 1 1 1h2c.550 0 1-.450 1-1v-9h8V4h-3z"/></svg>
<div style="left:497.5px;top:217px;width:513px;height:291px;background:#fff;border-radius:3px;box-shadow:0 0 5px 2.500px rgba(0,60,45,0.035);"></div>
<span id="t94" class="t" style="top:226.18px;font-size:9px;line-height:11.25px;font-weight:400;color:#2b2b2b;-webkit-text-stroke:0.38px #2b2b2b;left:507.5px;transform-origin:0 50%;transform:scaleX(0.9994);">Datasources</span>
<div style="left:507px;top:258.5px;width:13px;height:13px;background:#e6efed;border-radius:50%;"></div>
<span id="t95" class="t" style="top:260.16px;font-size:7.9px;line-height:9.88px;font-weight:400;color:#00695c;-webkit-text-stroke:0.33px #00695c;left:513.5px;transform:translateX(-50%);">1</span>
<div style="left:527px;top:250px;width:452.5px;height:31px;border:1px solid #e0e0e0;border-radius:3px;background:#fff;"></div>
<div style="left:534px;top:249.3px;width:20px;height:3px;background:#fff;"></div>
<span id="t96" class="t" style="top:246.29px;font-size:6.9px;line-height:8.62px;font-weight:400;color:#777;left:536.5px;transform-origin:0 50%;transform:scaleX(1.0031);">Type</span>
<span id="t97" class="t" style="top:259.51px;font-size:9.1px;line-height:11.38px;font-weight:400;color:#2b2b2b;left:536px;transform-origin:0 50%;transform:scaleX(1.033);">Entity</span>
<svg style="left:961.25px;top:258.75px;" width="13.5" height="13.5" viewBox="0 0 24 24"><path fill="#6b6b6b" d="M7 10l5 5 5-5z"/></svg>
<svg style="left:983.8px;top:258.0px;" width="14" height="14" viewBox="0 0 24 24"><path fill="#5f5f5f" d="M6 19c0 1.100.900 2 2 2h8c1.100 0 2-.900 2-2V7H6v12zM19 4h-3.500l-1-1h-5l-1 1H5v2h14V4z"/></svg>
<div style="left:527px;top:293px;width:452.5px;height:31px;border:1px solid #e0e0e0;border-radius:3px;background:#fff;"></div>
<div style="left:534px;top:292.5px;width:41px;height:3px;background:#fff;"></div>
<span id="t98" class="t" style="top:289.59px;font-size:6.9px;line-height:8.62px;font-weight:400;color:#777;left:536px;transform-origin:0 50%;transform:scaleX(1.0273);">Entity alias*</span>
<span id="t99" class="t" style="top:302.81px;font-size:9.1px;line-height:11.38px;font-weight:400;color:#2b2b2b;left:536px;transform-origin:0 50%;transform:scaleX(1.0043);">Selected Device</span>
<svg style="left:932.75px;top:301.25px;" width="14.5" height="14.5" viewBox="0 0 24 24"><path fill="#555" d="M19 6.41L17.59 5 12 10.59 6.41 5 5 6.41 10.59 12 5 17.59 6.41 19 12 13.41 17.59 19 19 17.59 13.41 12z"/></svg>
<svg style="left:959.75px;top:301.85px;" width="13.5" height="13.5" viewBox="0 0 24 24"><path fill="#555" d="M3 17.25V21h3.750L17.810 9.940l-3.750-3.750L3 17.250zM20.710 7.040c.390-.390.390-1.020 0-1.410l-2.340-2.340c-.390-.390-1.020-.390-1.410 0l-1.830 1.830 3.750 3.750 1.830-1.830z"/></svg>
<div style="left:527px;top:336px;width:452.5px;height:31.7px;border:1px solid #5c5c5c;border-radius:3px;background:#fff;"></div>
<div style="left:534px;top:335.5px;width:72px;height:3px;background:#fff;"></div>
<span id="t100" class="t" style="top:332.59px;font-size:6.9px;line-height:8.62px;font-weight:400;color:#666;left:536px;transform-origin:0 50%;transform:scaleX(1.011);">Time series data keys</span>
<div style="left:536px;top:343.5px;width:190.5px;height:16.8px;background:#e0e0e0;border-radius:8.400px;"></div>
<svg style="left:0px;top:0px;" width="1020" height="724" viewBox="0 0 1020 724"><rect x="542.50" y="348.45" width="1.500" height="1.500" rx="0.400" fill="#505050"/><rect x="542.50" y="351.15" width="1.500" height="1.500" rx="0.400" fill="#505050"/><rect x="542.50" y="353.85" width="1.500" height="1.500" rx="0.400" fill="#505050"/><rect x="545.20" y="348.45" width="1.500" height="1.500" rx="0.400" fill="#505050"/><rect x="545.20" y="351.15" width="1.500" height="1.500" rx="0.400" fill="#505050"/><rect x="545.20" y="353.85" width="1.500" height="1.500" rx="0.400" fill="#505050"/></svg>
<div style="left:554px;top:345.3px;width:118.5px;height:13.2px;background:#d4d4d4;border-radius:6.600px;"></div>
<svg style="left:560.75px;top:346.65px;stroke:#222;stroke-width:0.8px;" width="10.5" height="10.5" viewBox="0 0 24 24"><path fill="#222" d="M3.500 18.490l6-6.010 4 4L22 6.920l-1.410-1.410-7.090 7.970-4-4L2 16.990z"/></svg>
<span id="t101" class="t" style="top:346.96px;font-size:7.9px;line-height:9.88px;font-weight:400;color:#444;left:574.3px;transform-origin:0 50%;transform:scaleX(1.0194);">Temperature: <span style="position:static;color:#222;-webkit-text-stroke:0.330px #222">temperature</span></span>
<div style="left:677px;top:347px;width:10px;height:10px;background:#e91e63;border-radius:1.500px;"></div>
<svg style="left:691.8px;top:346.7px;" width="10.4" height="10.4" viewBox="0 0 24 24"><path fill="#333" d="M3 17.25V21h3.750L17.810 9.940l-3.750-3.750L3 17.250zM20.710 7.040c.390-.390.390-1.020 0-1.410l-2.340-2.340c-.390-.390-1.020-.390-1.410 0l-1.830 1.830 3.750 3.750 1.830-1.830z"/></svg>
<svg style="left:706.85px;top:346.15px;" width="11.5" height="11.5" viewBox="0 0 24 24"><path fill="#333" d="M19 6.41L17.59 5 12 10.59 6.41 5 5 6.41 10.59 12 5 17.59 6.41 19 12 13.41 17.59 19 19 17.59 13.41 12z"/></svg>
<div style="left:731px;top:343.5px;width:122px;height:16.8px;background:#e0e0e0;border-radius:8.400px;"></div>
<svg style="left:0px;top:0px;" width="1020" height="724" viewBox="0 0 1020 724"><rect x="737.70" y="348.45" width="1.500" height="1.500" rx="0.400" fill="#505050"/><rect x="737.70" y="351.15" width="1.500" height="1.500" rx="0.400" fill="#505050"/><rect x="737.70" y="353.85" width="1.500" height="1.500" rx="0.400" fill="#505050"/><rect x="740.40" y="348.45" width="1.500" height="1.500" rx="0.400" fill="#505050"/><rect x="740.40" y="351.15" width="1.500" height="1.500" rx="0.400" fill="#505050"/><rect x="740.40" y="353.85" width="1.500" height="1.500" rx="0.400" fill="#505050"/></svg>
<div style="left:749px;top:345.3px;width:50.5px;height:13.2px;background:#d4d4d4;border-radius:6.600px;"></div>
<svg style="left:755.75px;top:346.65px;stroke:#222;stroke-width:0.8px;" width="10.5" height="10.5" viewBox="0 0 24 24"><path fill="#222" d="M3.500 18.490l6-6.010 4 4L22 6.920l-1.410-1.410-7.090 7.970-4-4L2 16.990z"/></svg>
<span id="t102" class="t" style="top:346.96px;font-size:7.9px;line-height:9.88px;font-weight:400;color:#222;-webkit-text-stroke:0.33px #222;left:769px;transform-origin:0 50%;transform:scaleX(1.0363);">battery</span>
<div style="left:803.8px;top:347px;width:10px;height:10px;background:#4caf50;border-radius:1.500px;"></div>
<svg style="left:818.1px;top:346.7px;" width="10.4" height="10.4" viewBox="0 0 24 24"><path fill="#333" d="M3 17.25V21h3.750L17.810 9.940l-3.750-3.750L3 17.250zM20.710 7.040c.390-.390.390-1.020 0-1.410l-2.340-2.340c-.390-.390-1.020-.390-1.410 0l-1.830 1.830 3.750 3.750 1.830-1.830z"/></svg>
<svg style="left:833.25px;top:346.15px;" width="11.5" height="11.5" viewBox="0 0 24 24"><path fill="#333" d="M19 6.41L17.59 5 12 10.59 6.41 5 5 6.41 10.59 12 5 17.59 6.41 19 12 13.41 17.59 19 19 17.59 13.41 12z"/></svg>
<div style="left:527px;top:380px;width:452.5px;height:31px;border:1px solid #e0e0e0;border-radius:3px;background:#fff;"></div>
<span id="t103" class="t" style="top:391.11px;font-size:9.1px;line-height:11.38px;font-weight:400;color:#6f6f6f;left:536px;transform-origin:0 50%;transform:scaleX(1.0267);">Latest data keys</span>
<div style="left:527px;top:423px;width:452.5px;height:31px;border:1px solid #e0e0e0;border-radius:3px;background:#fff;"></div>
<span id="t104" class="t" style="top:434.11px;font-size:9.1px;line-height:11.38px;font-weight:400;color:#6f6f6f;left:536px;transform-origin:0 50%;transform:scaleX(1.0139);">Filter</span>
<span id="t105" class="t" style="top:433.86px;font-size:7.9px;line-height:9.88px;font-weight:400;color:#00695c;-webkit-text-stroke:0.33px #00695c;right:49px;transform-origin:100% 50%;transform:scaleX(1.0159);">Create new</span>
<div style="left:507px;top:479.5px;width:76px;height:20.2px;border:1px solid #e0e0e0;border-radius:2.500px;background:#fff;"></div>
<span id="t106" class="t" style="top:484.76px;font-size:7.9px;line-height:9.88px;font-weight:400;color:#00695c;-webkit-text-stroke:0.33px #00695c;left:516px;transform-origin:0 50%;transform:scaleX(1.0492);">Add datasource</span>
<div style="left:497.5px;top:517px;width:513px;height:68.5px;background:#fff;border-radius:3px;box-shadow:0 0 5px 2.500px rgba(0,60,45,0.035);"></div>
<span id="t107" class="t" style="top:525.58px;font-size:9px;line-height:11.25px;font-weight:400;color:#2b2b2b;-webkit-text-stroke:0.38px #2b2b2b;left:507.5px;transform-origin:0 50%;transform:scaleX(1.0419);">Limits</span>
<div style="left:507px;top:545px;width:494.5px;height:31.5px;border:1px solid #e0e0e0;border-radius:3px;background:#fff;"></div>
<span id="t108" class="t" style="top:556.11px;font-size:9.1px;line-height:11.38px;font-weight:400;color:#2b2b2b;left:516.5px;transform-origin:0 50%;transform:scaleX(1.0079);">Maximum entities per datasource</span>
<div style="left:939px;top:550.5px;width:58.5px;height:21px;border:1px solid #e0e0e0;border-radius:2.500px;background:#fff;"></div>
<span id="t109" class="t" style="top:556.05px;font-size:7.6px;line-height:9.5px;font-weight:400;color:#444;left:945.5px;transform-origin:0 50%;transform:scaleX(1.0943);">1024</span>
<svg style="left:988.5px;top:556px;" width="5" height="10" viewBox="0 0 5 10"><path fill="#777" d="M2.500 1.200L4.300 3.900H0.700Z"/><path fill="#777" d="M2.500 8.800L4.300 6.100H0.700Z"/></svg>
<svg style="left:0px;top:0px;" width="4" height="4" viewBox="0 0 4 4"><path fill="#5a565e" d="M0 0H2.500A2.500 2.500 0 0 0 0 2.500Z"/></svg>
<svg style="left:1016px;top:0px;" width="4" height="4" viewBox="0 0 4 4"><path fill="#5a565e" d="M4 0H1.500A2.500 2.500 0 0 1 4 2.500Z"/></svg>
<svg style="left:0px;top:720px;" width="4" height="4" viewBox="0 0 4 4"><path fill="#5a565e" d="M0 4H2.500A2.500 2.500 0 0 1 0 1.500Z"/></svg>
<svg style="left:1016px;top:720px;" width="4" height="4" viewBox="0 0 4 4"><path fill="#5a565e" d="M4 4H1.500A2.500 2.500 0 0 0 4 1.500Z"/></svg>
</div></body></html>
